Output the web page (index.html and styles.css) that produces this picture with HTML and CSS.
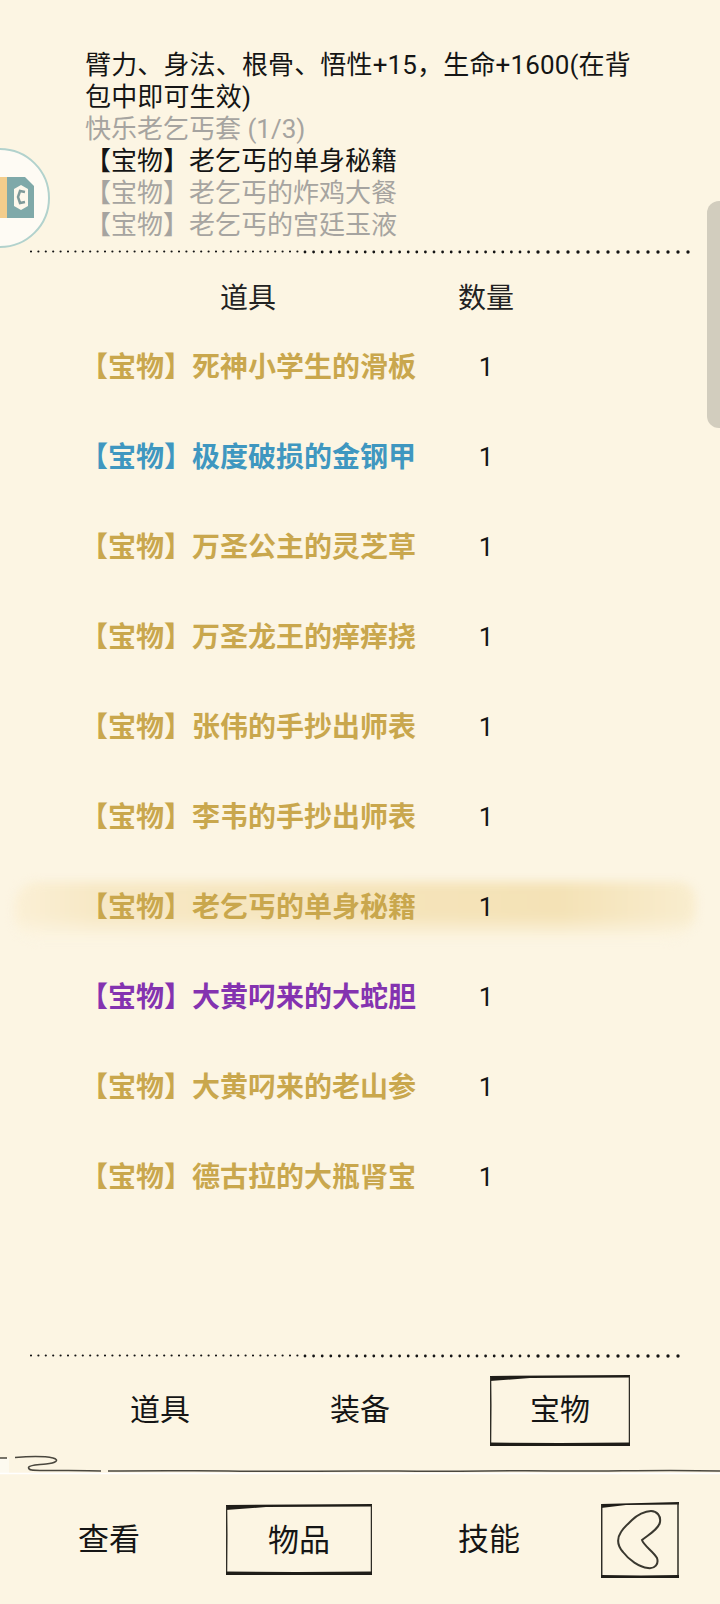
FILE: index.html
```html
<!DOCTYPE html>
<html lang="zh">
<head>
<meta charset="utf-8">
<title>物品</title>
<link rel="stylesheet" href="styles.css">
</head>
<body>
<main class="page">
  <div class="avatar">
    <svg class="avatar-logo" viewBox="0 0 100 100" width="100" height="100">
      <circle cx="0" cy="50" r="49" fill="#fefbf4" stroke="#b2d2cd" stroke-width="2"/>
      <rect x="0" y="29" width="7" height="41" fill="#f3cd8c"/>
      <path d="M7 29H25L34 38V70H7Z" fill="#7fa9a9"/>
      <path d="M14 41L21 37L28 41V58L21 62L14 58Z" fill="#fdf8ec"/>
      <path d="M25 44L20 43L18 49L20 55L25 54" fill="none" stroke="#7f9a9a" stroke-width="2.5"/>
    </svg>
  </div>
  <div class="scrollbar"></div>

  <section class="info">
    <p class="lead">臂力、身法、根骨、悟性+15，生命+1600(在背包中即可生效)</p>
    <p class="muted">快乐老乞丐套 (1/3)</p>
    <p>【宝物】老乞丐的单身秘籍</p>
    <p class="muted">【宝物】老乞丐的炸鸡大餐</p>
    <p class="muted">【宝物】老乞丐的宫廷玉液</p>
  </section>

  <svg class="dots dots-top" viewBox="0 0 720 6" width="720" height="6">
    <line class="dot-a" x1="31" y1="2.5" x2="298" y2="2.5"/>
    <line class="dot-b" x1="305" y1="3" x2="529" y2="3"/>
    <line class="dot-c" x1="538" y1="3" x2="690" y2="3"/>
  </svg>

  <div class="table-head">
    <span class="col-name">道具</span>
    <span class="col-qty">数量</span>
  </div>

  <ul class="items">
    <li class="item gold"><span class="col-name">【宝物】死神小学生的滑板</span><span class="col-qty">1</span></li>
    <li class="item blue"><span class="col-name">【宝物】极度破损的金钢甲</span><span class="col-qty">1</span></li>
    <li class="item gold"><span class="col-name">【宝物】万圣公主的灵芝草</span><span class="col-qty">1</span></li>
    <li class="item gold"><span class="col-name">【宝物】万圣龙王的痒痒挠</span><span class="col-qty">1</span></li>
    <li class="item gold"><span class="col-name">【宝物】张伟的手抄出师表</span><span class="col-qty">1</span></li>
    <li class="item gold"><span class="col-name">【宝物】李韦的手抄出师表</span><span class="col-qty">1</span></li>
    <li class="item gold selected"><span class="brush"></span><span class="col-name">【宝物】老乞丐的单身秘籍</span><span class="col-qty">1</span></li>
    <li class="item purple"><span class="col-name">【宝物】大黄叼来的大蛇胆</span><span class="col-qty">1</span></li>
    <li class="item gold"><span class="col-name">【宝物】大黄叼来的老山参</span><span class="col-qty">1</span></li>
    <li class="item gold"><span class="col-name">【宝物】德古拉的大瓶肾宝</span><span class="col-qty">1</span></li>
  </ul>

  <svg class="dots dots-bottom" viewBox="0 0 720 6" width="720" height="6">
    <line class="dot-a" x1="31" y1="2.5" x2="298" y2="2.5"/>
    <line class="dot-b" x1="305" y1="3" x2="529" y2="3"/>
    <line class="dot-c" x1="538" y1="3" x2="688" y2="3"/>
  </svg>

  <nav class="tabs">
    <span class="tab tab-1">道具</span>
    <span class="tab tab-2">装备</span>
    <span class="tab tab-3 boxed">
      <svg class="sketch" viewBox="0 0 140 71" width="140" height="71">
        <path class="ink-fill" d="M0 1L60 0.5L140 0V2.5L40 3L0 6Z"/>
        <path class="ink-thin" d="M139.5 1V70"/>
        <path class="ink-thin" d="M0.5 2L0.8 30L0.5 70"/>
        <path class="ink-fill" d="M0 67.5L70 68L140 67.5V71L0 71Z"/>
      </svg>
      宝物
    </span>
  </nav>

  <svg class="wave" viewBox="0 0 720 20" width="720" height="20">
    <path class="wave-bg" d="M0 3H9V18H0Z"/>
    <path class="wave-white" d="M0 18.5H720"/>
    <path class="wave-line" d="M0 3H7M15 2.5C28 1.5 46 1.5 53 3C60 5 56 8 46 9C38 10 29 10 28.5 12.5C28.5 15.5 33 15.5 40 15.5C60 15.5 85 15 101 16"/>
    <path class="wave-line" d="M108 16C170 16 200 15.5 228 16C270 17 310 15.5 398 16C470 17 500 15 560 16C610 16.5 660 14.5 720 16"/>
  </svg>

  <nav class="bottom">
    <span class="nav-item nav-1">查看</span>
    <span class="nav-item nav-2 boxed">
      <svg class="sketch" viewBox="0 0 146 71" width="146" height="71">
        <path class="ink-fill" d="M0 1L70 0.5L146 0V2.5L40 3L0 6Z"/>
        <path class="ink-thin" d="M145.5 1V70"/>
        <path class="ink-thin" d="M0.5 2L0.8 30L0.5 70"/>
        <path class="ink-fill" d="M0 67.5L70 68L146 67.5V71L0 71Z"/>
      </svg>
      物品
    </span>
    <span class="nav-item nav-3">技能</span>
    <span class="nav-item nav-4">
      <svg class="back" viewBox="0 0 78 76" width="78" height="76">
        <path class="ink-fill" d="M0 2L40 1L78 0V2.5L25 3L0 6Z"/>
        <path class="ink-thin" d="M77 1V75"/>
        <path class="ink-thin" d="M0.7 2V75"/>
        <path class="ink-fill" d="M0 73L40 73.5L78 73V76H0Z"/>
        <path class="ink-round" d="M31 18C36 13 44 9 50 9C56 9 60 14 59 20C58 27 47 33 41 38C43 44 52 49 56 56C58 62 54 67 47 66C38 65 28 58 22 50C16 43 16 36 20 30C23 25 27 22 31 18Z"/>
      </svg>
    </span>
  </nav>
</main>
</body>
</html>
```
FILE: styles.css
```css
* { box-sizing: border-box; }
html, body { margin: 0; padding: 0; }
body {
  width: 720px;
  height: 1604px;
  overflow: hidden;
  background: #fcf5e3;
  color: #151515;
  font-family: Roboto, "Noto Sans CJK SC", sans-serif;
}
.page { position: relative; width: 720px; height: 1604px; padding-top: 49px; overflow: hidden; }

.avatar { position: absolute; left: 0; top: 148px; width: 100px; height: 100px; }
.avatar-logo { display: block; }
.scrollbar {
  position: absolute; right: 0; top: 201px; width: 13px; height: 227px;
  background: #d2cdbe; border-radius: 12px 0 0 12px;
}

.info { padding: 0 84px 0 85px; font-size: 26px; line-height: 32px; }
.info p { margin: 0; }
.lead { letter-spacing: 0.15px; }
.muted { color: #a6a4a0; }

.dots { display: block; }
.dots line { stroke: #141414; stroke-linecap: round; }
.dot-a { stroke-width: 2.2; stroke-dasharray: 0 7.4; }
.dot-b { stroke-width: 2.8; stroke-dasharray: 0 8.6; }
.dot-c { stroke-width: 3.4; stroke-dasharray: 0 10; }
.dots-top { margin-top: 8px; }

.table-head {
  display: grid; grid-template-columns: 336px 140px; padding-left: 80px;
  margin-top: 21px; height: 47px; line-height: 46px; font-size: 28px; color: #222;
}
.col-name { text-align: center; position: relative; white-space: nowrap; }
.col-qty { text-align: center; position: relative; }

.items { list-style: none; margin: 0; padding: 0; height: 1030px; }
.item {
  position: relative; display: grid; grid-template-columns: 336px 140px; padding-left: 80px;
  height: 90px; line-height: 90px; font-size: 28px; font-weight: 700;
}
.item .col-qty { font-size: 26px; font-weight: 400; color: #151515; line-height: 88px; }
.gold { color: #c9a74d; }
.blue { color: #3f97c0; }
.purple { color: #8433b0; }
.brush {
  position: absolute; left: 14px; top: 19px; width: 682px; height: 58px;
  border-radius: 24px 18px 30px 24px;
  background:
    linear-gradient(180deg, rgba(252,245,227,0) 58%, #fcf5e3 100%),
    linear-gradient(90deg, #fbf0d6 0%, #f7e8c5 12%, #f5e4bb 50%, #f4e2b6 80%, #f9edcf 100%);
  filter: blur(5px);
}

.tabs { position: relative; height: 71px; margin-top: 16px; font-size: 30px; line-height: 69px; }
.tab { position: absolute; top: 0; text-align: center; height: 71px; }
.tab-1 { left: 90px; width: 140px; }
.tab-2 { left: 290px; width: 140px; }
.tab-3 { left: 490px; width: 140px; }
.boxed { position: absolute; }
.sketch { position: absolute; left: 0; top: 0; }

.wave { display: block; margin-top: 9px; }
.wave-bg { fill: #fdfaf0; }
.wave-white { stroke: #ffffff; stroke-width: 1.5; fill: none; }
.wave-line { stroke: #4a473e; stroke-width: 1.5; fill: none; }

.bottom { position: relative; height: 76px; margin-top: 27px; font-size: 31px; }
.nav-item { position: absolute; text-align: center; }
.nav-1 { left: 59px; width: 100px; top: 0; line-height: 76px; }
.nav-2 { left: 226px; width: 146px; height: 71px; top: 2px; line-height: 74px; }
.nav-3 { left: 439px; width: 100px; top: 0; line-height: 76px; }
.nav-4 { left: 601px; top: 0; width: 78px; height: 76px; }
.back { display: block; }

.ink-fill { fill: #1f1d18; }
.ink-thin { fill: none; stroke: #2e2c25; stroke-width: 1.5; }
.ink-round { fill: none; stroke: #3a382f; stroke-width: 2; }
```
